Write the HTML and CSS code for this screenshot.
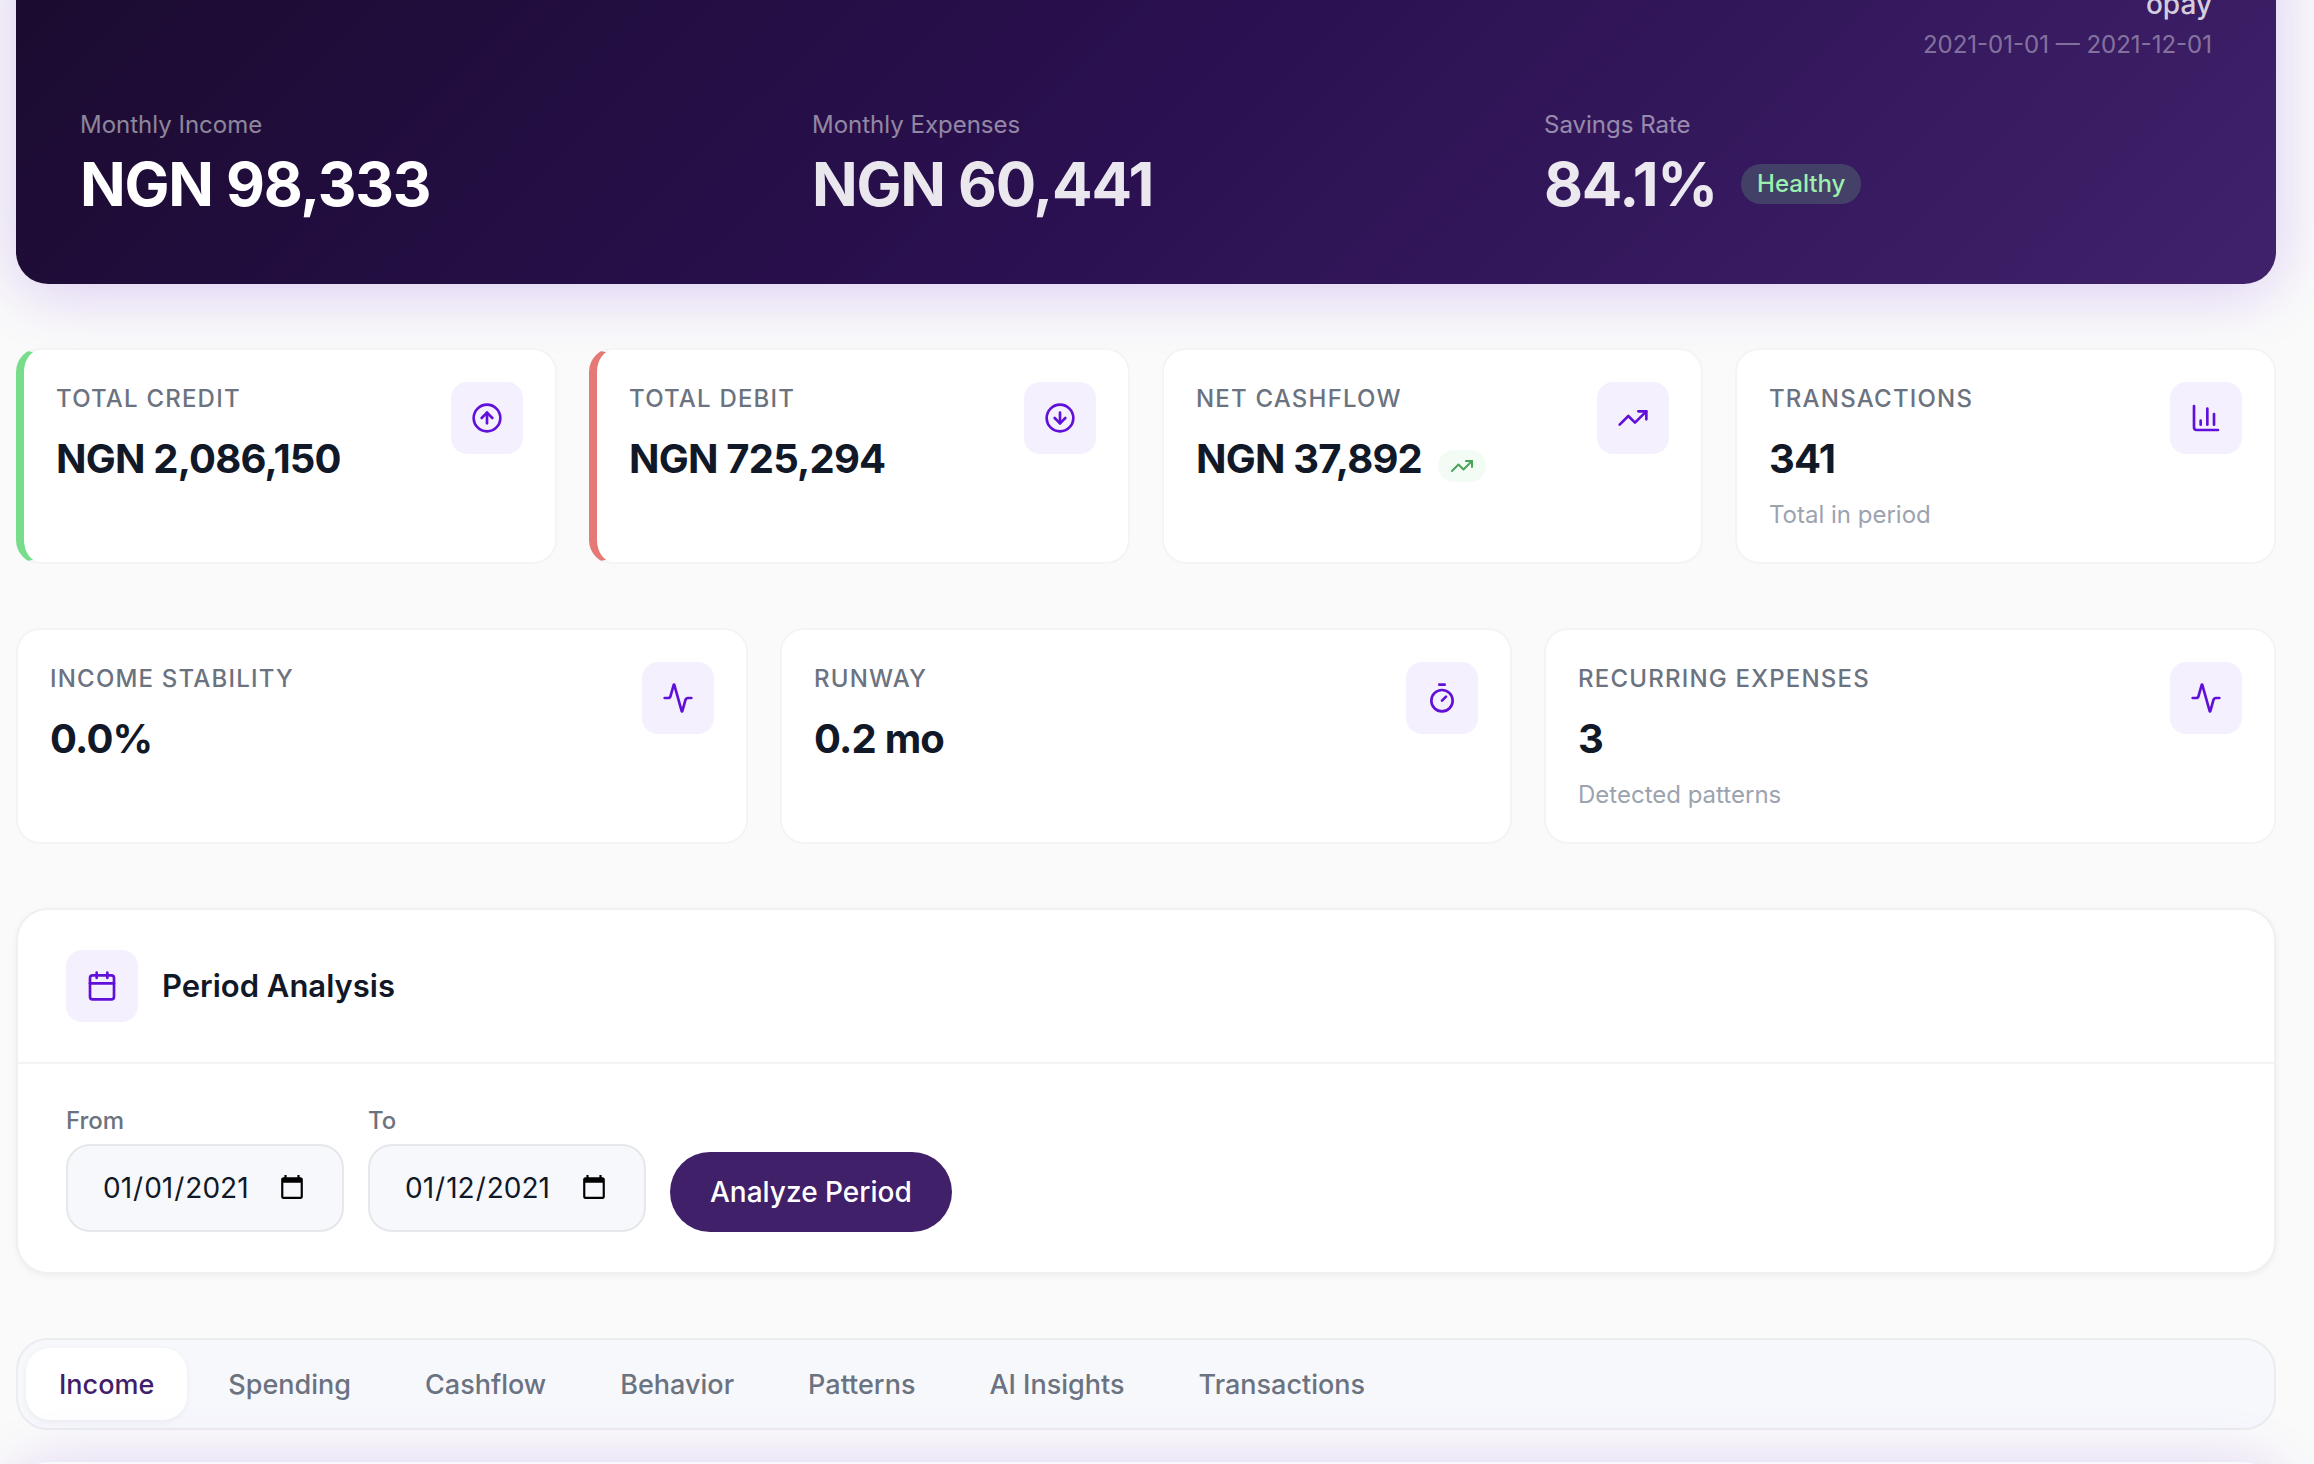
FILE: index.html
```html
<!DOCTYPE html>
<html lang="en">
<head>
<meta charset="UTF-8">
<meta name="viewport" content="width=device-width, initial-scale=1">
<title>Statement Analysis</title>
<link rel="stylesheet" href="styles.css">
</head>
<body>
<main class="page">

<!-- Hero summary -->
<section class="hero">
  <div class="hero-top">
    <p class="hero-bank">opay</p>
    <p class="hero-range">2021-01-01 — 2021-12-01</p>
  </div>
  <div class="hero-grid">
    <div>
      <p class="hero-label">Monthly Income</p>
      <p class="hero-value main">NGN 98,333</p>
    </div>
    <div>
      <p class="hero-label">Monthly Expenses</p>
      <p class="hero-value">NGN 60,441</p>
    </div>
    <div>
      <p class="hero-label">Savings Rate</p>
      <p class="hero-value">84.1% <span class="health">Healthy</span></p>
    </div>
  </div>
</section>

<!-- Totals -->
<section class="stats four">
  <div class="card credit">
    <div>
      <p class="card-label">Total Credit</p>
      <p class="card-value">NGN 2,086,150</p>
    </div>
    <span class="tile"><svg class="icon" viewBox="0 0 24 24"><circle cx="12" cy="12" r="10"/><path d="m16 12-4-4-4 4"/><path d="M12 16V8"/></svg></span>
  </div>
  <div class="card debit">
    <div>
      <p class="card-label">Total Debit</p>
      <p class="card-value">NGN 725,294</p>
    </div>
    <span class="tile"><svg class="icon" viewBox="0 0 24 24"><circle cx="12" cy="12" r="10"/><path d="M12 8v8"/><path d="m8 12 4 4 4-4"/></svg></span>
  </div>
  <div class="card">
    <div>
      <p class="card-label">Net Cashflow</p>
      <p class="card-value">NGN 37,892 <span class="trend"><svg class="icon" viewBox="0 0 24 24"><path d="M16 7h6v6"/><path d="m22 7-8.5 8.5-5-5L2 17"/></svg></span></p>
    </div>
    <span class="tile"><svg class="icon" viewBox="0 0 24 24"><path d="M16 7h6v6"/><path d="m22 7-8.5 8.5-5-5L2 17"/></svg></span>
  </div>
  <div class="card">
    <div>
      <p class="card-label">Transactions</p>
      <p class="card-value">341</p>
      <p class="card-note">Total in period</p>
    </div>
    <span class="tile"><svg class="icon" viewBox="0 0 24 24"><path d="M3 3v16a2 2 0 0 0 2 2h16"/><path d="M18 17V9"/><path d="M13 17V5"/><path d="M8 17v-3"/></svg></span>
  </div>
</section>

<!-- Health metrics -->
<section class="stats three">
  <div class="card">
    <div>
      <p class="card-label">Income Stability</p>
      <p class="card-value">0.0%</p>
    </div>
    <span class="tile"><svg class="icon" viewBox="0 0 24 24"><path d="M22 12h-2.48a2 2 0 0 0-1.93 1.46l-2.35 8.36a.25.25 0 0 1-.48 0L9.24 2.18a.25.25 0 0 0-.48 0l-2.35 8.36A2 2 0 0 1 4.49 12H2"/></svg></span>
  </div>
  <div class="card">
    <div>
      <p class="card-label">Runway</p>
      <p class="card-value">0.2 mo</p>
    </div>
    <span class="tile"><svg class="icon" viewBox="0 0 24 24"><path d="M10 2h4"/><path d="m12 14 3-3"/><circle cx="12" cy="14" r="8"/></svg></span>
  </div>
  <div class="card">
    <div>
      <p class="card-label">Recurring Expenses</p>
      <p class="card-value">3</p>
      <p class="card-note">Detected patterns</p>
    </div>
    <span class="tile"><svg class="icon" viewBox="0 0 24 24"><path d="M22 12h-2.48a2 2 0 0 0-1.93 1.46l-2.35 8.36a.25.25 0 0 1-.48 0L9.24 2.18a.25.25 0 0 0-.48 0l-2.35 8.36A2 2 0 0 1 4.49 12H2"/></svg></span>
  </div>
</section>

<!-- Period filter -->
<section class="period">
  <div class="period-head">
    <span class="tile"><svg class="icon" viewBox="0 0 24 24"><path d="M8 2v4"/><path d="M16 2v4"/><rect x="3" y="4" width="18" height="18" rx="2"/><path d="M3 10h18"/></svg></span>
    <h2>Period Analysis</h2>
  </div>
  <form class="period-form">
    <div class="field">
      <label for="from">From</label>
      <input id="from" type="date" value="2021-01-01">
    </div>
    <div class="field">
      <label for="to">To</label>
      <input id="to" type="date" value="2021-01-12">
    </div>
    <button class="analyze" type="button">Analyze Period</button>
  </form>
</section>

<!-- Tabs -->
<nav class="tabs">
  <button class="tab active" type="button">Income</button>
  <button class="tab" type="button">Spending</button>
  <button class="tab" type="button">Cashflow</button>
  <button class="tab" type="button">Behavior</button>
  <button class="tab" type="button">Patterns</button>
  <button class="tab" type="button">AI Insights</button>
  <button class="tab" type="button">Transactions</button>
</nav>

<section class="panel"></section>
</main>
</body>
</html>
```
FILE: styles.css
```css
* { box-sizing:border-box; }
body { margin:0; height:100vh; overflow:hidden; background:#fafafa; color:#111827; font-family:'Inter', sans-serif; font-size:28px; }
p, h2 { margin:0; }
button, input { font:inherit; }
.page { display:flex; flex-direction:column; gap:64px; padding:0 38px 0 16px; margin-top:-80px; }
.icon { display:block; width:32px; height:32px; fill:none; stroke:currentColor; stroke-width:2; stroke-linecap:round; stroke-linejoin:round; }

/* hero */
.hero { padding:64px; border-radius:32px; color:#fff; background:linear-gradient(135deg, #1a0b2e 0%, #2a1050 50%, #40216b 100%); box-shadow:0 8px 64px rgba(96,16,216,0.2); }
.hero-top { text-align:right; margin-bottom:46px; }
.hero-bank { line-height:40px; margin-bottom:4px; font-weight:500; color:rgba(255,255,255,0.8); }
.hero-range { font-size:24px; line-height:34px; color:rgba(255,255,255,0.4); }
.hero-grid { display:grid; grid-template-columns:repeat(3, 1fr); gap:64px; }
.hero-label { font-size:24px; line-height:34px; margin-bottom:6px; color:rgba(255,255,255,0.5); }
.hero-value { display:flex; align-items:center; gap:24px; font-size:60px; line-height:72px; font-weight:700; letter-spacing:-0.02em; color:rgba(255,255,255,0.9); }
.hero-value.main { color:#fff; }
.health { padding:3px 16px; border-radius:20px; background:rgba(120,220,138,0.2); color:#9cf0ae; font-size:24px; line-height:34px; font-weight:500; letter-spacing:0; }

/* stat cards */
.stats { display:grid; gap:32px; }
.four { grid-template-columns:repeat(4, 1fr); }
.three { grid-template-columns:repeat(3, 1fr); }
.card { display:flex; justify-content:space-between; align-items:flex-start; min-height:216px; padding:32px 32px 30px; background:#fff; border:2px solid #f3f4f6; border-radius:24px; }
.credit { border-left:8px solid #78dd8a; }
.debit { border-left:8px solid #e67975; }
.card-label { font-size:24px; line-height:34px; margin-bottom:14px; font-weight:500; letter-spacing:0.05em; text-transform:uppercase; color:#6b7280; }
.card-value { display:flex; align-items:flex-end; gap:16px; font-size:40px; line-height:58px; font-weight:700; letter-spacing:-0.02em; }
.card-note { margin-top:10px; font-size:24px; line-height:34px; color:#9ca3af; }
.trend { padding:4px 12px; margin-bottom:6px; border-radius:16px; background:#f2fcf5; color:#4ba35a; }
.trend .icon { width:24px; height:24px; }
.tile { display:flex; align-items:center; justify-content:center; width:72px; height:72px; flex:none; border-radius:16px; background:#f4f0fe; color:#6010d8; }

/* period */
.period { background:#fff; border:2px solid #f0f0f2; border-radius:32px; box-shadow:0 2px 6px rgba(0,0,0,0.05); }
.period-head { display:flex; align-items:center; gap:24px; padding:40px 48px; border-bottom:2px solid #f3f4f6; }
.period-head h2 { font-size:31px; line-height:40px; font-weight:600; }
.period-form { display:flex; align-items:flex-end; gap:24px; padding:40px 48px; }
.field { display:flex; flex-direction:column; gap:6px; }
.field label { font-size:24px; line-height:34px; font-weight:500; color:#6b7280; }
.field input { width:278px; height:88px; padding:0 34px; color:#111827; background:#f7f8fc; border:2px solid #e5e7eb; border-radius:24px; }
.analyze { height:80px; padding:0 40px; border:none; border-radius:40px; background:#3f2069; color:#fff; font-weight:500; cursor:pointer; }

/* tabs */
.tabs { display:flex; gap:8px; padding:8px; background:#f7f8fc; border:2px solid #ebecf0; border-radius:32px; }
.tab { height:72px; padding:0 33px; border:none; border-radius:24px; background:none; color:#6b7280; font-size:27px; font-weight:500; cursor:pointer; }
.tab.active { background:#fff; color:#3f2069; box-shadow:0 2px 6px rgba(0,0,0,0.05); }

.panel { height:320px; margin-top:-32px; background:#fff; border:2px solid #f9f8fc; border-radius:32px; box-shadow:0 8px 64px rgba(96,16,216,0.2); }
```
